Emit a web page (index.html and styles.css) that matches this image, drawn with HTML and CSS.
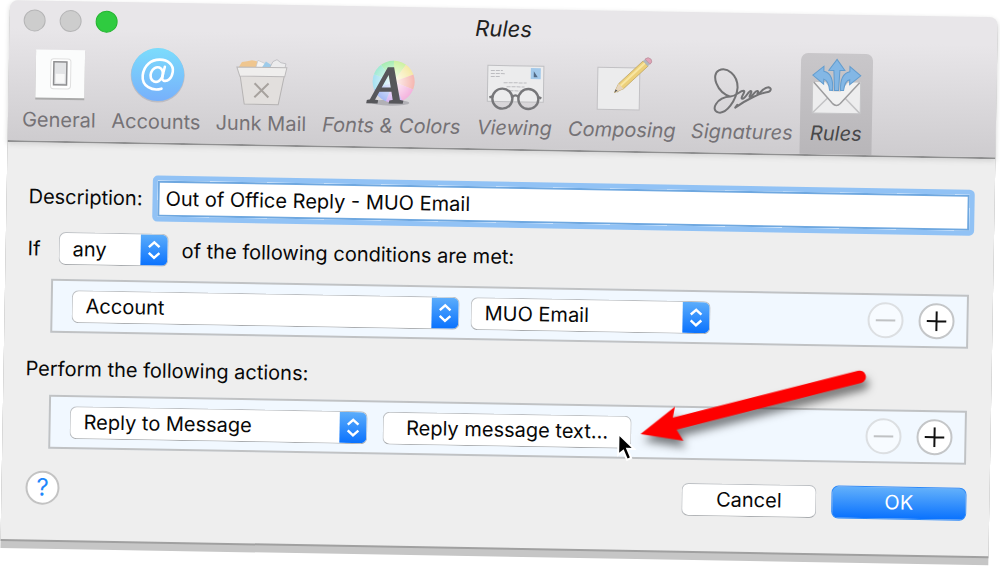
FILE: index.html
```html
<!DOCTYPE html>
<html lang="en">
<head>
<meta charset="UTF-8">
<meta name="viewport" content="width=device-width, initial-scale=1.0">
<title>Rules</title>
<link rel="stylesheet" href="styles.css">
</head>
<body>
  <main class="window">
    <header class="header">
      <div class="titlebar">
        <div class="lights">
          <button class="light" type="button" aria-label="Close"></button>
          <button class="light" type="button" aria-label="Minimize"></button>
          <button class="light light-zoom" type="button" aria-label="Zoom"></button>
        </div>
        <h1 class="title">Rules</h1>
      </div>
      <nav class="toolbar">
        <button class="tool" type="button">
          <svg class="tool-icon" viewBox="0 0 60 58">
            <rect x="6" y="6" width="49" height="49" fill="#aaa"/>
            <rect x="6" y="5" width="49" height="48" fill="#fbfcfc"/>
            <rect x="21" y="14" width="20" height="30" rx="3" fill="#fff" stroke="#e0e0e0"/>
            <rect x="24" y="17" width="13" height="23" fill="#e3e4e6" stroke="#8e8e90" stroke-width="1.5"/>
            <rect x="26" y="29" width="9" height="9" fill="#f8f8f8"/>
          </svg>
          <span>General</span>
        </button>
        <button class="tool" type="button">
          <svg class="tool-icon" viewBox="0 0 60 58">
            <defs>
              <linearGradient id="atFill" x1="0" y1="0" x2="0" y2="1">
                <stop offset="0" stop-color="#7cdcfc"/>
                <stop offset="1" stop-color="#77b0fb"/>
              </linearGradient>
            </defs>
            <circle cx="31" cy="29" r="27" fill="#bdbcc2"/>
            <circle cx="31" cy="28" r="26.5" fill="url(#atFill)"/>
            <g fill="none" stroke="#fff" stroke-width="2.6" stroke-linecap="round">
              <path d="M35 42C26 45 15 40 16 29C17 19 24 13 33 13C41 13 47 18 46 25C45 32 41 35 37 34C34 33 36 29 38 20"/>
              <ellipse cx="30" cy="28" rx="6" ry="7.5" transform="rotate(20 30 28)"/>
            </g>
          </svg>
          <span>Accounts</span>
        </button>
        <button class="tool" type="button">
          <svg class="tool-icon" viewBox="0 0 60 58">
            <path d="M7 19L10 14L15 13L20 12L25 13L27 19Z" fill="#efc68f"/>
            <path d="M24 19L26 12L33 15L38 19Z" fill="#f4f4f4" stroke="#c4c4c8" stroke-width=".7"/>
            <path d="M30 19L34 13L40 17L42 20Z" fill="#9ccbea"/>
            <path d="M38 19L41 13L45 11L49 14L54 15L53 20Z" fill="#ececed" stroke="#b4b4b8" stroke-width=".7"/>
            <path d="M8 25L13 56H47L53 25Z" fill="#e2dfdd" stroke="#b5b3b3"/>
            <path d="M5 19H55L53 28H8Z" fill="#efeeed" stroke="#bbb9ba"/>
            <path d="M23 35L37 49M37 35L23 49" stroke="#a7a29e" stroke-width="2"/>
          </svg>
          <span>Junk Mail</span>
        </button>
        <button class="tool tool-slanted" type="button">
          <svg class="tool-icon" viewBox="0 0 60 58">
            <defs>
              <clipPath id="wheel"><circle cx="31" cy="31" r="21"/></clipPath>
              <radialGradient id="wheelGlow">
                <stop offset="0" stop-color="#fff" stop-opacity=".9"/>
                <stop offset="1" stop-color="#fff" stop-opacity=".15"/>
              </radialGradient>
            </defs>
            <ellipse cx="28" cy="52" rx="19" ry="3" fill="#b2b1b6"/>
            <g clip-path="url(#wheel)">
              <path d="M31 31L10 4H31Z" fill="#96e9a4"/>
              <path d="M31 31V4H50Z" fill="#c4ef90"/>
              <path d="M31 31L50 4L60 20Z" fill="#f3e597"/>
              <path d="M31 31L60 20V42Z" fill="#f4aaa2"/>
              <path d="M31 31L60 42L45 60Z" fill="#f2a4d7"/>
              <path d="M31 31L45 60H20Z" fill="#d0a6f1"/>
              <path d="M31 31L20 60L0 44Z" fill="#94aef4"/>
              <path d="M31 31L0 44V20Z" fill="#96dcef"/>
              <path d="M31 31L0 20L10 4Z" fill="#90e6cb"/>
            </g>
            <circle cx="31" cy="31" r="21" fill="url(#wheelGlow)"/>
            <text class="icon-letter" x="8" y="52">A</text>
          </svg>
          <span>Fonts &amp; Colors</span>
        </button>
        <button class="tool tool-slanted" type="button">
          <svg class="tool-icon" viewBox="0 0 60 58">
            <rect x="2" y="13" width="56" height="36" fill="#ececed" stroke="#bfbfc2"/>
            <path d="M5 18H17M5 21H20M5 24H15M18 30H41M21 34H39M24 38H37" stroke="#bcbcc0" stroke-dasharray="4 1"/>
            <rect x="45" y="15" width="10" height="11" fill="#a3c9ea"/>
            <path d="M48 24V18L52 24Z" fill="#536b86"/>
            <g fill="none" stroke="#77777a" stroke-width="2.4">
              <circle cx="17" cy="46" r="10"/>
              <circle cx="43" cy="46" r="10"/>
              <path d="M27 44Q30 41 33 44M7 44L4 45M53 44L56 45"/>
            </g>
          </svg>
          <span>Viewing</span>
        </button>
        <button class="tool tool-slanted" type="button">
          <svg class="tool-icon" viewBox="0 0 60 58">
            <rect x="5" y="13" width="42" height="42" fill="#ececed" stroke="#c2c1c4"/>
            <path d="M24 37L47 12" stroke="#c9c7c6" stroke-width="3"/>
            <path d="M22 38L26 29L50 6L55 11L31 34Z" fill="#edd079" stroke="#bda467" stroke-width=".8"/>
            <path d="M28 31L52 8" stroke="#f8e6a2" stroke-width="2"/>
            <path d="M22 38L26 29L31 34Z" fill="#e6d5bd"/>
            <path d="M22 38L23 35L25 36Z" fill="#555"/>
            <path d="M50 6L52 4L57 9L55 11Z" fill="#b1b8bf"/>
            <path d="M52 4Q55 1 58 4Q60 7 57 9Z" fill="#e2a4b6" stroke="#b58a98" stroke-width=".7"/>
          </svg>
          <span>Composing</span>
        </button>
        <button class="tool tool-slanted" type="button">
          <svg class="tool-icon" viewBox="0 0 60 58">
            <g fill="none" stroke="#737375" stroke-width="2" stroke-linecap="round" stroke-linejoin="round">
              <path d="M18 40C4 36 -2 18 6 14C14 10 25 18 25 31C24 44 14 58 6 56C-2 54 4 41 18 40C25 39 27 34 31 34C34 34 27 42 30 42C33 42 36 34 38 34C41 34 35 41 38 40C41 38 43 33 45 34C47 34 43 39 46 37C50 33 52 30 56 30C60 31 58 35 54 35C48 36 35 42 23 51L25 48"/>
            </g>
          </svg>
          <span>Signatures</span>
        </button>
        <button class="tool tool-slanted tool-selected" type="button">
          <svg class="tool-icon" viewBox="0 0 60 58">
            <path d="M6 24H54V55H6Z" fill="#ededee" stroke="#c5c5c7"/>
            <path d="M6 55L23 38M54 55L37 38" stroke="#c3c3c5" stroke-width="1.5"/>
            <path d="M6 24L26 45Q30 49 34 45L54 24Z" fill="#f1f1f1"/>
            <path d="M7 24L26 45Q30 49 34 45L53 24" fill="none" stroke="#9d9d9f" stroke-width="1.5"/>
            <path d="M18 23H42L34 33H26Z" fill="#c4c3c6"/>
            <g fill="#83b7e5" stroke="#629cce" stroke-width="1">
              <path d="M28 32L27 12H22L30 1L38 12H33L32 32Z"/>
              <path d="M6 17L17 8V13Q27 15 26 32H23Q22 22 17 21V26Z"/>
              <path d="M54 17L43 8V13Q33 15 34 32H37Q38 22 43 21V26Z"/>
            </g>
          </svg>
          <span>Rules</span>
        </button>
      </nav>
    </header>

    <form class="content">
      <div class="line description">
        <label for="description">Description:</label>
        <input type="text" id="description" class="field" value="Out of Office Reply - MUO Email">
      </div>

      <div class="line match">
        <label for="match">If</label>
        <div class="popup popup-match">
          <select id="match"><option>any</option><option>all</option></select>
          <svg class="popup-cap" viewBox="0 0 27 32"><path d="M8 13L13.5 8L19 13M8 19L13.5 24L19 19"/></svg>
        </div>
        <span>of the following conditions are met:</span>
      </div>

      <div class="rule">
        <div class="popup popup-source">
          <select aria-label="Condition"><option>Account</option></select>
          <svg class="popup-cap" viewBox="0 0 27 32"><path d="M8 13L13.5 8L19 13M8 19L13.5 24L19 19"/></svg>
        </div>
        <div class="popup popup-account">
          <select aria-label="Account"><option>MUO Email</option></select>
          <svg class="popup-cap" viewBox="0 0 27 32"><path d="M8 13L13.5 8L19 13M8 19L13.5 24L19 19"/></svg>
        </div>
        <div class="row-buttons">
          <button class="round" type="button" aria-label="Remove condition" disabled><svg viewBox="0 0 20 20"><path d="M0 10H20"/></svg></button>
          <button class="round" type="button" aria-label="Add condition"><svg viewBox="0 0 20 20"><path d="M0 10H20M10 0V20"/></svg></button>
        </div>
      </div>

      <p class="actions-title">Perform the following actions:</p>

      <div class="rule">
        <div class="popup popup-action">
          <select aria-label="Action"><option>Reply to Message</option></select>
          <svg class="popup-cap" viewBox="0 0 27 32"><path d="M8 13L13.5 8L19 13M8 19L13.5 24L19 19"/></svg>
        </div>
        <div class="reply">
          <button class="push push-reply" type="button">Reply message text...</button>
          <svg class="pointer" viewBox="0 0 20 30"><path d="M2 2V23L7 19L11 28L15 26L11 17H18Z"/></svg>
          <svg class="arrow" viewBox="0 0 240 90"><path d="M3 71L37 43L35 54L219 4A6 6 0 0 1 223 16L39 66L46 77Z"/></svg>
        </div>
        <div class="row-buttons">
          <button class="round" type="button" aria-label="Remove action" disabled><svg viewBox="0 0 20 20"><path d="M0 10H20"/></svg></button>
          <button class="round" type="button" aria-label="Add action"><svg viewBox="0 0 20 20"><path d="M0 10H20M10 0V20"/></svg></button>
        </div>
      </div>

      <div class="footer">
        <button class="help" type="button" aria-label="Help">?</button>
        <button class="push" type="button">Cancel</button>
        <button class="push push-default" type="submit">OK</button>
      </div>
    </form>
  </main>
</body>
</html>
```
FILE: styles.css
```css
* {
  box-sizing: border-box;
}

body {
  margin: 0;
  min-height: 100vh;
  background: #fff;
  font-family: Inter, Roboto, sans-serif;
  font-size: 20px;
  line-height: 24px;
  color: #080808;
  overflow: hidden;
}

button, input, select {
  font: inherit;
  color: inherit;
  margin: 0;
}

/* the whole window is tilted slightly */
.window {
  margin: 0 2px 0 10px;
  background: #eeeeee;
  border-radius: 8px 8px 0 0;
  box-shadow: 0 2px 0 #a0a0a0, 0 9px 0 #c6c6c6;
  transform: rotate(1deg);
  transform-origin: 0 0;
}

.header {
  background: linear-gradient(#e8e6e9 20%, #cecccf);
  border-bottom: 2px solid #8f8f90;
  border-radius: 8px 8px 0 0;
  box-shadow: 0 2px 5px #d4d4d4;
}

.titlebar {
  display: grid;
  grid-template-columns: 1fr auto 1fr;
  align-items: center;
  height: 39px;
  padding: 0 14px;
}

.lights {
  display: flex;
  gap: 14px;
}

.light {
  width: 22px;
  height: 22px;
  padding: 0;
  border: 1px solid #b5b5b6;
  border-radius: 50%;
  background: #cdcdcd;
}

.light-zoom {
  border-color: #23b52f;
  background: #2fcb40;
}

.title {
  margin: 0;
  font-size: 22px;
  font-weight: 400;
  font-style: italic;
  color: #222;
}

.toolbar {
  display: grid;
  grid-template-columns: 90px 104px 106px 155px 91px 124px 116px 72px;
  padding-left: 6px;
}

.tool {
  display: flex;
  flex-direction: column;
  align-items: center;
  padding: 5px 0 9px;
  border: 0;
  background: none;
  color: #757276;
  white-space: nowrap;
}

.tool-slanted {
  font-style: italic;
}

.tool-selected {
  border-radius: 7px 7px 0 0;
  background: linear-gradient(#c9c7ca, #b8b6b9);
  color: #484849;
}

.tool-icon {
  width: 60px;
  height: 58px;
  margin-bottom: 5px;
  overflow: visible;
}

.icon-letter {
  font: italic 52px/1 "Liberation Serif", serif;
  fill: #57575b;
  stroke: #57575b;
  stroke-width: 2;
}

.content {
  padding: 31px 20px 35px 22px;
}

.line {
  display: flex;
  align-items: center;
}

.description {
  gap: 10px;
}

.field {
  flex: 1;
  min-width: 0;
  height: 46px;
  padding: 0 8px;
  border: 5px solid #91c2f5;
  border-radius: 5px;
  background: #fff;
  box-shadow: inset 0 0 0 2px #6fa8e0;
  outline: none;
}

.match {
  gap: 13px;
  margin-top: 12px;
}

.match label {
  width: 18px;
}

.popup {
  display: grid;
  height: 33px;
  border: 1px solid #bdc0c4;
  border-bottom-color: #a8abae;
  border-radius: 7px;
  background: #fff;
  overflow: hidden;
}

.popup select,
.popup-cap {
  grid-area: 1 / 1;
}

.popup select {
  appearance: none;
  width: 100%;
  padding: 0 30px 0 13px;
  border: 0;
  background: none;
}

.popup-cap {
  justify-self: end;
  width: 27px;
  height: 100%;
  background: linear-gradient(#5cadfb, #0a72fe);
  fill: none;
  stroke: #fff;
  stroke-width: 2.5;
  pointer-events: none;
}

.popup-match {
  width: 110px;
}

.popup-source {
  width: 388px;
}

.popup-account {
  width: 240px;
}

.popup-action {
  width: 298px;
}

.rule {
  display: flex;
  align-items: center;
  gap: 11px;
  height: 54px;
  margin: 14px 4px 0 24px;
  padding: 0 12px 0 19px;
  border: 2px solid #c0c2c4;
  background: #f1f8ff;
}

.popup-action + .reply {
  margin-left: 4px;
}

.row-buttons {
  display: flex;
  gap: 15px;
  margin-left: auto;
}

.round {
  display: grid;
  place-items: center;
  width: 36px;
  height: 36px;
  padding: 0;
  border: 2px solid #c4c6c8;
  border-radius: 50%;
  background: #fff;
}

.round svg {
  width: 20px;
  height: 20px;
  stroke: #111;
  stroke-width: 2;
}

.round:disabled {
  border-color: #dcdfe2;
  background: #f7fbff;
}

.round:disabled svg {
  stroke: #c0c2c4;
}

.actions-title {
  margin: 24px 0 0;
}

.push {
  width: 135px;
  height: 33px;
  padding: 0;
  border: 1px solid #bdc0c4;
  border-bottom-color: #a8abae;
  border-radius: 7px;
  background: #fff;
}

.push-reply {
  width: 249px;
}

.push-default {
  border-color: #2f8af8;
  background: linear-gradient(#62b0fb, #0a72fe);
  color: #fff;
}

.reply {
  position: relative;
}

/* pointer and arrow lie over the row */
.pointer {
  position: absolute;
  left: 234px;
  top: 16px;
  width: 20px;
  height: 30px;
  fill: #000;
  stroke: #fff;
  stroke-width: 2;
}

.arrow {
  position: absolute;
  left: 255px;
  top: -53px;
  width: 240px;
  height: 90px;
  fill: #fe0000;
  filter: drop-shadow(3px 7px 4px rgba(0, 0, 0, 0.5));
  pointer-events: none;
}

.footer {
  display: flex;
  align-items: center;
  gap: 15px;
  margin: 22px 3px 0 2px;
}

.help {
  width: 34px;
  height: 34px;
  margin-right: auto;
  padding: 0;
  border: 2px solid #c3c3c3;
  border-radius: 50%;
  background: #fff;
  color: #1e88fb;
  font-size: 24px;
}
```
